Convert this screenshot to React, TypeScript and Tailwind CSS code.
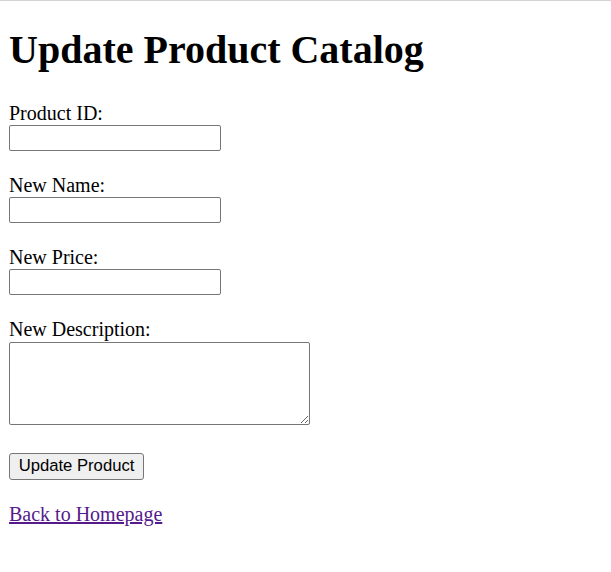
export default function App() {
  const label = "block text-[20px] leading-[23.33px]";
  const field =
    "block h-[26px] w-[212px] rounded-[2px] border border-[#767676] bg-white px-[2px] font-['Liberation_Sans',sans-serif] text-[16.67px] outline-none";

  return (
    <div className="min-h-screen border-t border-[#d3d3d3] bg-white pl-[9px] font-['Liberation_Serif',serif] text-black">
      <h1 className="mt-[26px] text-[40px] font-bold leading-[46px]">Update Product Catalog</h1>

      <form className="mt-[28.5px] flex flex-col items-start" onSubmit={(e) => e.preventDefault()}>
        <label htmlFor="pid" className={label}>Product ID:</label>
        <input id="pid" type="text" className={field} />

        <label htmlFor="pname" className={"mt-[23px] " + label}>New Name:</label>
        <input id="pname" type="text" className={field} />

        <label htmlFor="pprice" className={"mt-[23px] " + label}>New Price:</label>
        <input id="pprice" type="text" className={field} />

        <label htmlFor="pdesc" className={"mt-[23px] " + label}>New Description:</label>
        <textarea
          id="pdesc"
          className="block h-[83px] w-[301px] rounded-[2px] border border-[#767676] bg-white p-[2px] font-['Liberation_Mono',monospace] text-[16.67px] outline-none"
        />

        <button
          type="submit"
          className="mt-[28.5px] h-[27px] w-[135px] rounded-[3px] border border-[#767676] bg-[#efefef] font-['Liberation_Sans',sans-serif] text-[16.67px] leading-none text-black"
        >
          Update Product
        </button>
      </form>

      <a href="#" className="mt-[23px] inline-block text-[20px] leading-[23px] text-[#551a8b] underline">
        Back to Homepage
      </a>
    </div>
  );
}
